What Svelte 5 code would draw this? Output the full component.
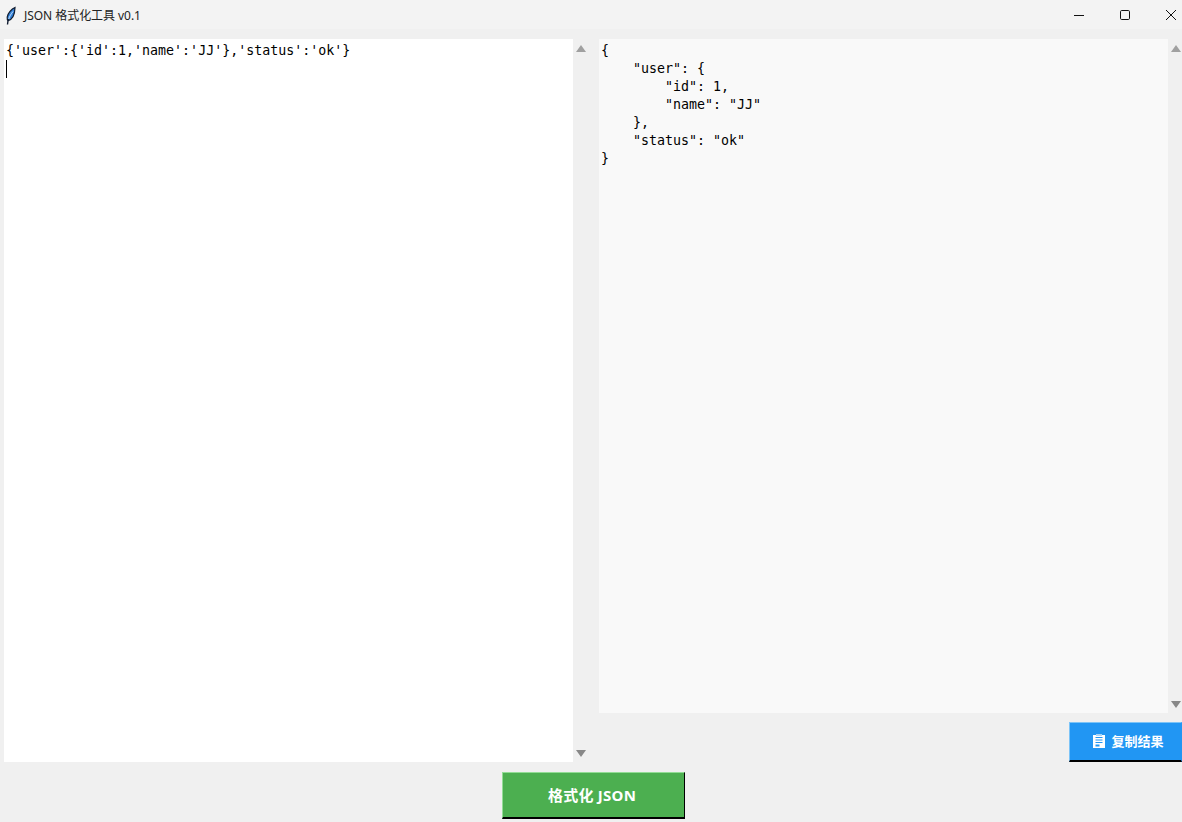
<script>
    const input = "{'user':{'id':1,'name':'JJ'},'status':'ok'}";
    const output = JSON.stringify({user: {id: 1, name: "JJ"}, status: "ok"}, null, 4);
</script>

<div class="window">
    <header class="titlebar">
        <svg class="feather" width="16" height="22" viewBox="0 0 16 22">
            <path d="M11 3.5 C7.5 5 3.8 9 3.2 13 C3 14.8 3.3 16 4.2 16.6 C8 15.5 10.8 10.5 11 3.5 Z" fill="#2f7fd8" stroke="#101c30" stroke-width="1.2"/>
            <path d="M9 7.5 C7 10 5.4 12.5 4.8 15" stroke="#d5e8fb" stroke-width="0.9" fill="none"/>
            <path d="M4.2 15 L3.5 20.5" stroke="#101c30" stroke-width="1.4" fill="none"/>
        </svg>
        <span class="title">JSON 格式化工具 v0.1</span>
        <div class="controls">
            <svg width="46" height="26" viewBox="0 0 46 26"><path d="M18 13.5 H28" stroke="#111" stroke-width="1"/></svg>
            <svg width="46" height="26" viewBox="0 0 46 26"><rect x="18.5" y="8.5" width="9" height="9" rx="1.2" fill="none" stroke="#111" stroke-width="1"/></svg>
            <svg width="46" height="26" viewBox="0 0 46 26"><path d="M18 8 L28 18 M28 8 L18 18" stroke="#111" stroke-width="1"/></svg>
        </div>
    </header>

    <main class="panes">
        <section class="pane">
            <div class="box left">
                <div class="text">{input}</div>
                <div class="caret"></div>
            </div>
            <div class="scrollbar">
                <span class="up"></span>
                <span class="down"></span>
            </div>
        </section>

        <section class="right">
            <div class="pane grow">
                <div class="box result">
                    <pre class="text">{output}</pre>
                </div>
                <div class="scrollbar">
                    <span class="up"></span>
                    <span class="down"></span>
                </div>
            </div>
            <div class="copyrow">
                <button class="btn copy">
                    <svg width="12" height="14" viewBox="0 0 12 14">
                        <path fill="#fff" d="M0 1 H3 V0 H9 V1 H12 V14 H0 Z"/>
                        <path fill="#a9d4f7" d="M3 0 H9 V2 H3 Z"/>
                        <path fill="#2196f3" d="M2.5 3 H9.5 V4 H2.5 Z M2.5 5.5 H9.5 V6.5 H2.5 Z M2.5 8 H9.5 V9 H2.5 Z M2.5 10.5 H6.5 V12.5 H2.5 Z"/>
                    </svg>
                    复制结果
                </button>
            </div>
        </section>
    </main>

    <footer class="actions">
        <button class="btn format">格式化 JSON</button>
    </footer>
</div>

<style>
    :global(body) {
        margin: 0;
        background: #f0f0f0;
    }

    .window {
        width: 1182px;
        height: 822px;
        display: flex;
        flex-direction: column;
        overflow: hidden;
        font-family: "Liberation Sans", "Noto Sans CJK SC", sans-serif;
    }

    .titlebar {
        height: 29px;
        flex: none;
        display: flex;
        align-items: center;
        background: #f3f3f3;
        padding-left: 4px;
    }

    .feather {
        margin-right: 4px;
    }

    .title {
        font-family: "Noto Sans", "Noto Sans CJK SC", sans-serif;
        font-size: 12px;
        letter-spacing: -0.05px;
        color: #222;
    }

    .controls {
        margin-left: auto;
        display: flex;
        margin-right: -12px;
    }

    .panes {
        display: grid;
        grid-template-columns: 586px 583px;
        column-gap: 9px;
        padding: 10px 0 0 4px;
        height: 723px;
        flex: none;
    }

    .pane {
        display: flex;
        min-height: 0;
    }

    .grow {
        flex: 1;
    }

    .box {
        width: 569px;
        flex: none;
        box-sizing: border-box;
        padding: 3px 2px;
        font-family: "DejaVu Sans Mono", monospace;
        font-size: 13.3px;
        line-height: 18px;
        color: #000;
    }

    .left {
        background: #fff;
    }

    .result {
        background: #f9f9f9;
    }

    .text {
        margin: 0;
        font: inherit;
        white-space: pre;
    }

    .caret {
        width: 1px;
        height: 18px;
        background: #000;
    }

    .scrollbar {
        width: 16px;
        flex: none;
        display: flex;
        flex-direction: column;
        justify-content: space-between;
        align-items: center;
        padding: 6px 0 5px;
        box-sizing: border-box;
    }

    .up, .down {
        width: 0;
        height: 0;
        border-left: 5px solid transparent;
        border-right: 5px solid transparent;
    }

    .up {
        border-bottom: 7px solid #a0a0a0;
    }

    .down {
        border-top: 7px solid #888;
    }

    .right {
        display: flex;
        flex-direction: column;
    }

    .copyrow {
        display: flex;
        justify-content: flex-end;
        padding-top: 9px;
    }

    .btn {
        display: flex;
        align-items: center;
        justify-content: center;
        box-sizing: border-box;
        color: #fff;
        font-family: "Noto Sans", "Noto Sans CJK SC", sans-serif;
        font-weight: 700;
        padding: 0;
        border-style: solid;
        border-width: 1px 1px 2px 1px;
    }

    .copy {
        width: 113px;
        height: 40px;
        gap: 6px;
        padding: 0 0 2px 6px;
        font-size: 13px;
        background: #2196f3;
        border-color: #7cc4f8 #2196f3 #000 #7cc4f8;
    }

    .actions {
        display: flex;
        padding: 10px 0 0 502px;
    }

    .format {
        width: 183px;
        height: 47px;
        font-size: 15px;
        letter-spacing: 0.25px;
        padding: 0 3px 2px 0;
        background: #4caf50;
        border-color: #93dd96 #000 #000 #93dd96;
    }
</style>
